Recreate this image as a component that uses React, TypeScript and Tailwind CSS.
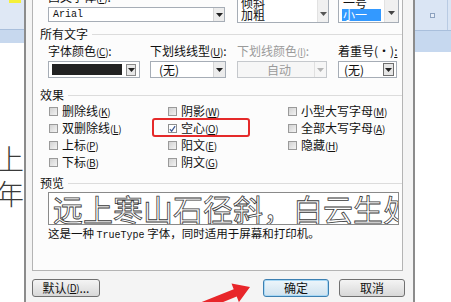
import React from "react";

const Key = ({ k }: { k: string }) => (
  <span className="text-[10px] tracking-[-0.3px]">
    (<span className="underline">{k}</span>)
  </span>
);

const Tri = ({ c = "#222" }: { c?: string }) => (
  <svg width="7" height="4" viewBox="0 0 7 4">
    <path d="M0 0 H7 L3.5 4 Z" fill={c} />
  </svg>
);

const Box = ({ checked }: { checked?: boolean }) => (
  <div
    className={
      checked
        ? "w-[9px] h-[9px] border border-[#8e8f8f] bg-white flex items-center justify-center shrink-0"
        : "w-[9px] h-[9px] border border-[#9a9a9a] bg-linear-to-br from-[#d2d2d2] to-[#f3f3f3] shrink-0"
    }
  >
    {checked && (
      <svg width="8" height="8" viewBox="0 0 8 8">
        <path d="M1 4.2 L3 6.5 L7 0.8" stroke="#3e5a94" strokeWidth="1.4" fill="none" />
      </svg>
    )}
  </div>
);

const Check = ({ label, k, checked }: { label: string; k: string; checked?: boolean }) => (
  <div className="flex items-center gap-[4px] h-[17px]">
    <Box checked={checked} />
    <span className="text-[12px] leading-[12px] whitespace-nowrap text-[#111]">
      {label}
      <Key k={k} />
    </span>
  </div>
);

const Section = ({ label }: { label: string }) => (
  <div className="flex items-center gap-[4px] h-[12px] pl-[7px]">
    <span className="text-[12px] leading-[12px] text-[#111] whitespace-nowrap">{label}</span>
    <div className="flex-1 h-px bg-[#dcdcdc]" />
  </div>
);

export default function App() {
  return (
    <div className="relative w-[451px] h-[302px] overflow-hidden bg-white font-['Noto_Sans_CJK_SC','Noto_Sans',sans-serif]">
      {/* Word background */}
      <div className="flex w-full h-full">
        <div className="w-[30px] flex flex-col">
          <div className="h-[30px] bg-[#dfe8f5] border-b border-r border-[#a9bfdc] rounded-br-[3px] relative">
            <div className="absolute left-[9px] top-0 w-[12px] h-[3px] bg-[#f5f03a]" />
          </div>
          <div className="h-[13px] bg-[#c7d8ee]" />
          <div className="mt-[98px] text-[28px] leading-[35px] text-[#3a3a3a] font-light -ml-[4px] whitespace-nowrap">
            <div>上寒</div>
            <div>年年</div>
          </div>
        </div>
        <div className="flex-1" />
        <div className="w-[36px] flex flex-col">
          <div className="h-[31px] bg-[#dae5f4] border-b border-[#a9bfdc] flex items-center pl-[15px] relative">
            <div className="w-[5px] h-[5px] border border-[#8da2bf] bg-[#e7eef8]" />
            <div className="absolute right-[3px] top-0 w-px h-[30px] bg-[#b9cbe3]" />
          </div>
          <div className="h-[21px] bg-[#c6d8ef]" />
        </div>
      </div>

      {/* Dialog */}
      <div className="absolute left-[24px] top-0 w-[391px] h-[302px] bg-[#f4f4f4] border-l-2 border-r-2 border-[#8c8c8c] flex flex-col">
        <div className="ml-[6px] w-[371px] h-[271px] bg-[#fcfcfc] border-l border-r border-b border-[#b4b4b4] flex flex-col">
          {/* top row */}
          <div className="flex items-start pl-[15px] h-[23px]">
            <div className="flex flex-col w-[177px] -mt-[10px]">
              <div className="h-[14px] leading-[14px] text-[12px] text-[#111]">
                西文字体<Key k="F" />:
              </div>
              <div className="mt-[3px] h-[15px] border border-[#a6adb6] bg-white flex items-center">
                <span className="pl-[4px] flex-1 font-['Liberation_Mono',monospace] text-[10px] leading-[10px] text-[#111]">
                  Arial
                </span>
                <div className="w-[11px] h-full flex items-center justify-center bg-[#ececec] border-l border-[#d5d5d5]">
                  <Tri />
                </div>
              </div>
            </div>
            <div className="ml-[12px] w-[92px] h-[40px] -mt-[17px] border border-[#a6adb6] bg-white flex">
              <div className="flex-1 flex flex-col justify-end pb-[1px] pl-[3px] text-[12px] leading-[12px] text-[#111]">
                <div>常规</div>
                <div>倾斜</div>
                <div>加粗</div>
              </div>
              <div className="w-[11px] bg-[#f0f0f0] border-l border-[#e2e2e2] flex flex-col justify-end items-center pb-[6px]">
                <Tri c="#555" />
              </div>
            </div>
            <div className="ml-[9px] w-[61px] h-[40px] -mt-[17px] border border-[#a6adb6] bg-white flex">
              <div className="flex-1 flex flex-col justify-end pb-[1px] pl-[3px] text-[12px] leading-[12px] text-[#111]">
                <div className="pl-[1px]">小初</div>
                <div className="pl-[1px]">一号</div>
                <div className="bg-[#3399ff] text-white pl-[1px] w-[39px]">小一</div>
              </div>
              <div className="w-[14px] bg-[#f0f0f0] border-l border-[#e2e2e2] flex flex-col justify-end items-center pb-[7px]">
                <Tri c="#444" />
              </div>
            </div>
          </div>

          <div className="mt-[5px]">
            <Section label="所有文字" />
          </div>

          {/* labels row */}
          <div className="mt-[5px] h-[12px] pl-[15px] grid grid-cols-[102px_87px_101px_60px] text-[12px] leading-[12px] whitespace-nowrap">
            <div className="text-[#111]">
              字体颜色<Key k="C" />:
            </div>
            <div className="text-[#111]">
              下划线线型<Key k="U" />:
            </div>
            <div className="text-[#9a9a9a]">
              下划线颜色<Key k="I" />:
            </div>
            <div className="text-[#111]">
              着重号(·)<span className="underline">:</span>
            </div>
          </div>

          {/* combos row */}
          <div className="mt-[4px] h-[17px] pl-[15px] grid grid-cols-[102px_87px_101px_60px]">
            <div className="w-[92px] h-[17px] border border-[#a6adb6] bg-white flex items-center px-[3px] gap-[4px]">
              <div className="flex-1 h-[11px] bg-[#222]" />
              <div className="w-[10px] h-[12px] border border-[#8a8a8a] bg-[#e8e8e8] flex items-center justify-center">
                <Tri />
              </div>
            </div>
            <div className="w-[76px] h-[17px] border border-[#a6adb6] bg-white flex items-center">
              <span className="flex-1 pl-[8px] text-[12px] leading-[12px] text-[#111]">(无)</span>
              <div className="w-[12px] h-full flex items-center justify-center bg-[#ececec] border-l border-[#d5d5d5]">
                <Tri />
              </div>
            </div>
            <div className="w-[90px] h-[17px] border border-[#c5c8cc] bg-[#f6f6f6] flex items-center">
              <span className="flex-1 text-center pl-[6px] text-[12px] leading-[12px] text-[#9a9a9a]">自动</span>
              <div className="w-[12px] h-full flex items-center justify-center border-l border-[#e0e0e0]">
                <Tri c="#b5b5b5" />
              </div>
            </div>
            <div className="w-[59px] h-[17px] border border-[#a6adb6] bg-white flex items-center pr-[2px]">
              <span className="flex-1 pl-[5px] text-[12px] leading-[12px] text-[#111]">(无)</span>
              <div className="w-[11px] h-[13px] border border-[#6f6f6f] bg-[#e6e6e6] flex items-center justify-center">
                <Tri />
              </div>
            </div>
          </div>

          <div className="mt-[11px]">
            <Section label="效果" />
          </div>

          {/* checkboxes */}
          <div className="mt-[2px] pl-[16px] grid grid-cols-[119px_120px_1fr]">
            <div className="flex flex-col">
              <Check label="删除线" k="K" />
              <Check label="双删除线" k="L" />
              <Check label="上标" k="P" />
              <Check label="下标" k="B" />
            </div>
            <div className="flex flex-col">
              <Check label="阴影" k="W" />
              <Check label="空心" k="O" checked />
              <Check label="阳文" k="E" />
              <Check label="阴文" k="G" />
            </div>
            <div className="flex flex-col">
              <Check label="小型大写字母" k="M" />
              <Check label="全部大写字母" k="A" />
              <Check label="隐藏" k="H" />
            </div>
          </div>

          <div className="mt-[6px]">
            <Section label="预览" />
          </div>

          <div className="mt-[3px] ml-[15px] w-[351px] h-[33px] border border-[#8a8a8a] bg-white overflow-hidden whitespace-nowrap">
            <div className="pl-[4px] text-[30px] leading-[31px] font-normal text-transparent [-webkit-text-stroke:0.8px_#3a3a3a]">
              远上寒山石径斜，白云生处
            </div>
          </div>

          <div className="mt-[2px] pl-[15px] h-[12px] text-[11.5px] leading-[12px] text-[#111] whitespace-nowrap">
            这是一种 <span className="font-['Liberation_Mono',monospace] text-[10px]">TrueType</span> 字体，同时适用于屏幕和打印机。
          </div>
        </div>

        {/* buttons */}
        <div className="mt-[8px] ml-[6px] w-[373px] flex justify-between">
          <div className="w-[68px] h-[18px] border border-[#707070] rounded-[3px] bg-linear-to-b from-[#f4f4f4] to-[#d8d8d8] flex items-center justify-center text-[12px] leading-[12px] text-[#111]">
            默认<Key k="D" />...
          </div>
          <div className="flex gap-[10px]">
            <div className="w-[66px] h-[18px] border border-[#3c7fb1] rounded-[3px] bg-linear-to-b from-[#eef6fb] to-[#cfe2ef] shadow-[inset_0_0_0_1px_#a8d8f5] flex items-center justify-center text-[12px] leading-[12px] text-[#111]">
              确定
            </div>
            <div className="w-[66px] h-[18px] border border-[#707070] rounded-[3px] bg-linear-to-b from-[#f4f4f4] to-[#d8d8d8] flex items-center justify-center text-[12px] leading-[12px] text-[#111]">
              取消
            </div>
          </div>
        </div>
      </div>

      {/* annotation: red box */}
      <div className="absolute left-[152px] top-[118px] w-[98px] h-[19px] border-2 border-[#e52a2a] rounded-[3px]" />

      {/* annotation: red arrow */}
      <svg className="absolute left-0 top-0 pointer-events-none" width="451" height="302" viewBox="0 0 451 302">
        <polygon
          points="250,287 231.5,283.6 233.7,289.2 198.5,303.3 201.5,310.7 236.7,296.6 238.9,302.2"
          fill="#e8262a"
        />
      </svg>
    </div>
  );
}
